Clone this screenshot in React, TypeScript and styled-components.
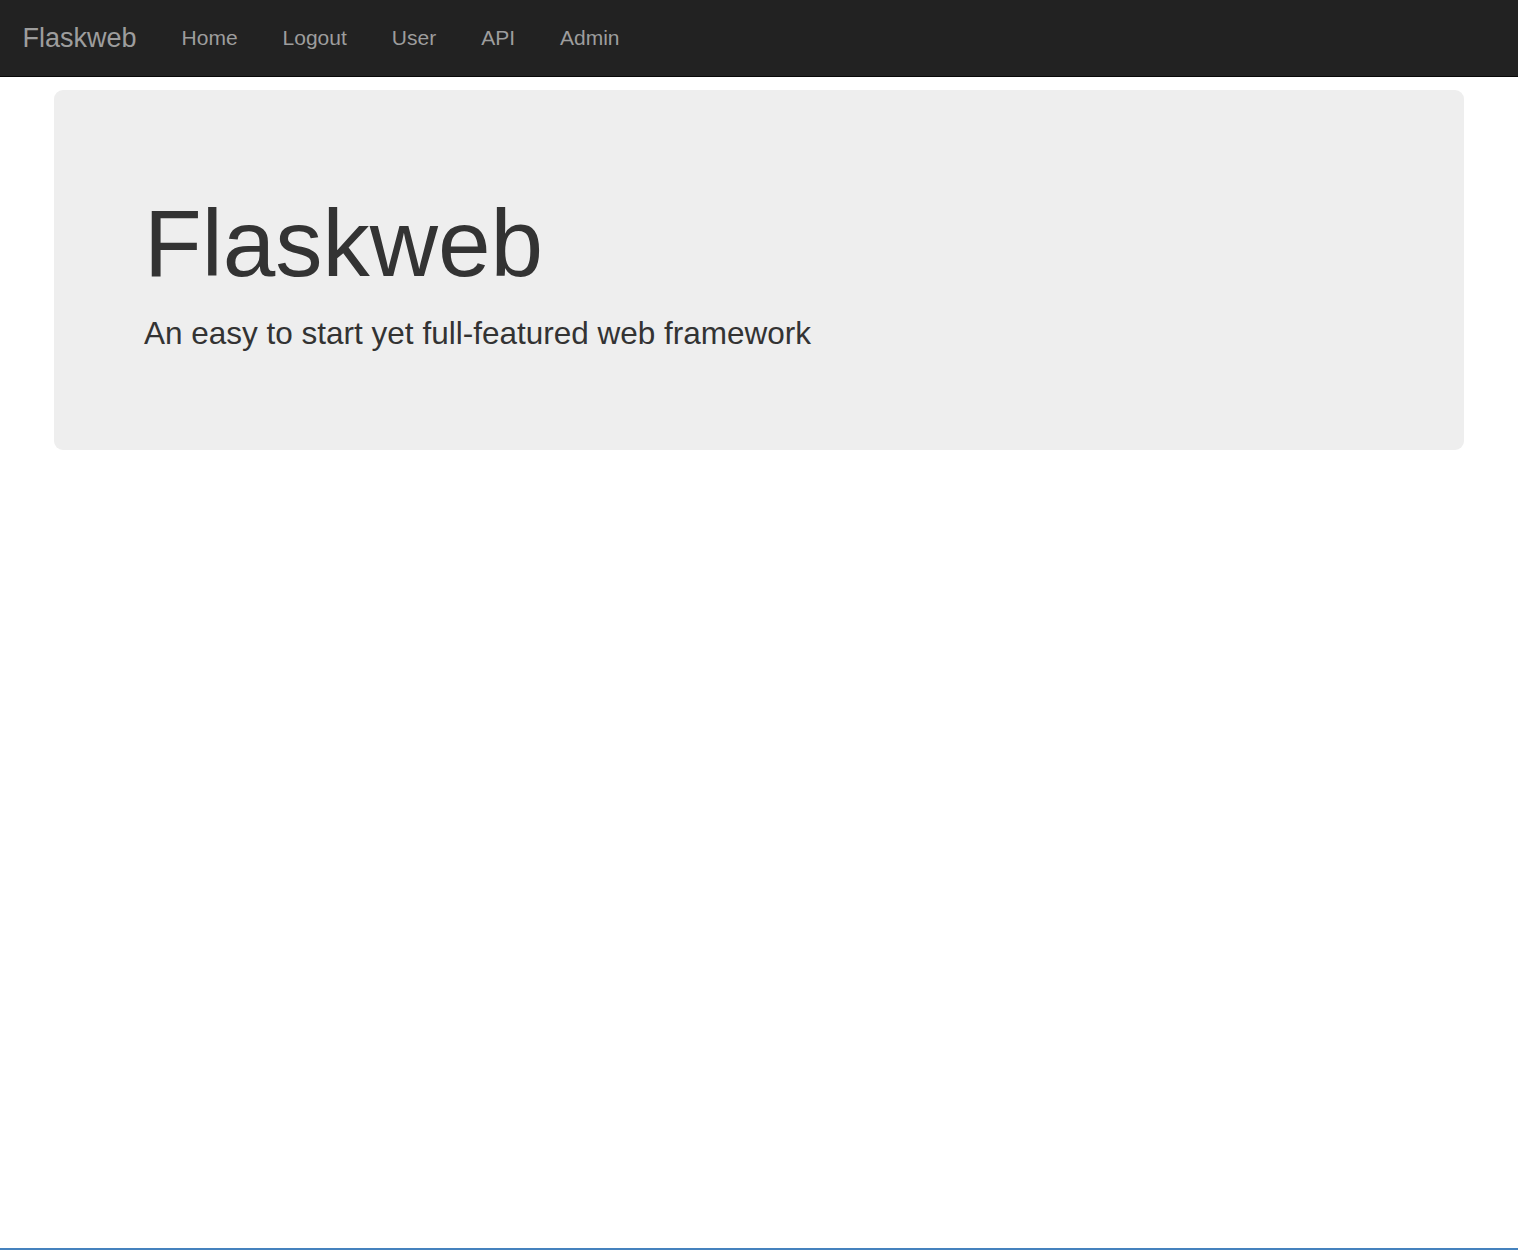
import React from "react";
import styled, { createGlobalStyle } from "styled-components";

const Global = createGlobalStyle`
  html, body { margin: 0; padding: 0; }
  body {
    font-family: "Liberation Sans", Arial, Helvetica, sans-serif;
    font-size: 21px;
    line-height: 1.42857;
    color: #333;
    background: #fff;
  }
  * { box-sizing: border-box; }
`;

const Page = styled.div`
  min-height: 1250px;
  border-bottom: 2px solid #4582be;
`;

const Navbar = styled.nav`
  background: #222;
  border-bottom: 1.5px solid #080808;
  min-height: 76.5px;
`;

const NavInner = styled.div`
  display: flex;
  align-items: stretch;
  padding: 0 22.5px;
`;

const Brand = styled.a`
  display: block;
  font-size: 27px;
  line-height: 30px;
  padding: 22.5px 22.5px 22.5px 0;
  color: #9d9d9d;
  text-decoration: none;
  height: 75px;
`;

const NavList = styled.ul`
  display: flex;
  list-style: none;
  margin: 0;
  padding: 0;
`;

const NavLink = styled.a`
  display: block;
  font-size: 21px;
  line-height: 30px;
  padding: 22.5px;
  color: #9d9d9d;
  text-decoration: none;
`;

const Container = styled.div`
  width: 1455px;
  margin: 0 auto;
  padding: 13.5px 22.5px 0;
`;

const Jumbotron = styled.div`
  background: #eee;
  border-radius: 9px;
  padding: 72px 90px;
`;

const Title = styled.h1`
  font-size: 94.5px;
  line-height: 1.1;
  font-weight: 500;
  margin: 30px 0 15px;
  color: #333;
`;

const Lead = styled.p`
  font-size: 31.5px;
  line-height: 45px;
  font-weight: 200;
  margin: 0 0 22.5px;
  color: #333;
`;

const links = ["Home", "Logout", "User", "API", "Admin"];

export default function App() {
  return (
    <Page>
      <Global />
      <Navbar>
        <NavInner>
          <Brand href="#">Flaskweb</Brand>
          <NavList>
            {links.map((l) => (
              <li key={l}>
                <NavLink href="#">{l}</NavLink>
              </li>
            ))}
          </NavList>
        </NavInner>
      </Navbar>
      <Container>
        <Jumbotron>
          <Title>Flaskweb</Title>
          <Lead>An easy to start yet full-featured web framework</Lead>
        </Jumbotron>
      </Container>
    </Page>
  );
}
